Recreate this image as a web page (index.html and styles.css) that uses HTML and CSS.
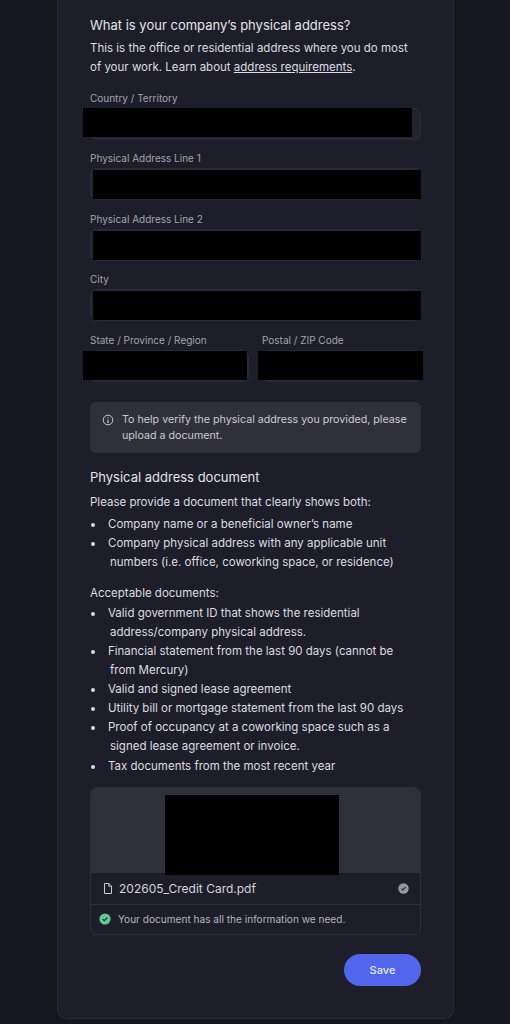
FILE: index.html
```html
<!DOCTYPE html>
<html lang="en">
<head>
    <meta charset="UTF-8">
    <title>Physical address</title>
    <link rel="stylesheet" href="styles.css">
</head>
<body>
    <main class="card">
        <h2 class="title">What is your company’s physical address?</h2>
        <p class="lead">This is the office or residential address where you do most of your work. Learn about <a href="#">address requirements</a>.</p>

        <div class="field">
            <label>Country / Territory</label>
            <div class="input"><div class="redact redact-country"></div></div>
        </div>
        <div class="field">
            <label>Physical Address Line 1</label>
            <div class="input"><div class="redact redact-line"></div></div>
        </div>
        <div class="field">
            <label>Physical Address Line 2</label>
            <div class="input"><div class="redact redact-line"></div></div>
        </div>
        <div class="field">
            <label>City</label>
            <div class="input"><div class="redact redact-line"></div></div>
        </div>
        <div class="field-row">
            <div class="field">
                <label>State / Province / Region</label>
                <div class="input"><div class="redact redact-state"></div></div>
            </div>
            <div class="field">
                <label>Postal / ZIP Code</label>
                <div class="input"><div class="redact redact-zip"></div></div>
            </div>
        </div>

        <div class="notice">
            <svg class="notice-icon" width="12" height="12" viewBox="0 0 12 12" fill="none" stroke="#c9c9d0" stroke-width="1">
                <circle cx="6" cy="6" r="4.8"/>
                <path d="M6 5.4v2.8M5.2 8.3h1.6"/>
                <circle cx="6" cy="3.8" r=".6" fill="#c9c9d0" stroke="none"/>
            </svg>
            <span>To help verify the physical address you provided, please upload a document.</span>
        </div>

        <h3 class="subtitle">Physical address document</h3>
        <p class="list-intro">Please provide a document that clearly shows both:</p>
        <ul class="doc-list">
            <li>Company name or a beneficial owner’s name</li>
            <li>Company physical address with any applicable unit numbers (i.e. office, coworking space, or residence)</li>
        </ul>

        <p class="list-intro list-second">Acceptable documents:</p>
        <ul class="doc-list">
            <li>Valid government ID that shows the residential address/company physical address.</li>
            <li>Financial statement from the last 90 days (cannot be from Mercury)</li>
            <li>Valid and signed lease agreement</li>
            <li>Utility bill or mortgage statement from the last 90 days</li>
            <li>Proof of occupancy at a coworking space such as a signed lease agreement or invoice.</li>
            <li>Tax documents from the most recent year</li>
        </ul>

        <div class="upload">
            <div class="preview"><div class="preview-redact"></div></div>
            <div class="file-row">
                <svg width="12" height="13" viewBox="0 0 12 13" fill="none" stroke="#c9c9d0" stroke-width="1" stroke-linejoin="round">
                    <path d="M2.5 1.5h4.4L9.5 4.1v7.4h-7z"/>
                    <path d="M6.8 1.5v2.7h2.7"/>
                </svg>
                <span class="file-name">202605_Credit Card.pdf</span>
                <svg class="file-status" width="11" height="11" viewBox="0 0 11 11">
                    <circle cx="5.5" cy="5.5" r="5.2" fill="#97979f"/>
                    <path d="M3.4 5.6l1.5 1.4 2.7-2.8" fill="none" stroke="#2a2a35" stroke-width="1.2"/>
                </svg>
            </div>
            <div class="check-row">
                <svg width="12" height="12" viewBox="0 0 12 12">
                    <circle cx="6" cy="6" r="5.6" fill="#63c795"/>
                    <path d="M3.6 6.1l1.7 1.6 3-3.1" fill="none" stroke="#1e2a2a" stroke-width="1.3"/>
                </svg>
                <span>Your document has all the information we need.</span>
            </div>
        </div>

        <div class="actions">
            <button class="save">Save</button>
        </div>
    </main>
</body>
</html>
```

FILE: styles.css
```css
* {
    box-sizing: border-box;
}
body {
    margin: 0;
    height: 1024px;
    overflow: hidden;
    background: #16161e;
    color: #e0e0e5;
    font-family: Inter, "Liberation Sans", sans-serif;
    font-size: 11.5px;
}
.card {
    width: 397px;
    height: 1019px;
    margin-left: 57px;
    padding: 16px 32px 0;
    background: #1e1e2a;
    border: 1px solid #2b2b37;
    border-top: none;
    border-radius: 0 0 10px 10px;
}
.title {
    margin: 0;
    font-size: 13px;
    font-weight: 400;
    line-height: 18px;
    color: #e4e4e8;
}
.lead {
    margin: 5px 0 0;
    line-height: 19px;
    color: #dcdce1;
}
.lead a {
    color: #dcdce1;
}
.field {
    position: relative;
    margin-top: 11.5px;
}
.lead + .field {
    margin-top: 13.5px;
}
.field label {
    display: block;
    height: 17px;
    font-size: 10px;
    line-height: 14px;
    color: #a4a4ad;
}
.input {
    position: relative;
    height: 32px;
    border: 2px solid #2a2a36;
    border-radius: 7px;
    background: #22222e;
}
.redact {
    position: absolute;
    background: #000;
}
.redact-country {
    left: -9px;
    right: 7px;
    top: -2px;
    height: 29px;
}
.redact-line {
    left: 1px;
    right: -2px;
    top: 0;
    height: 29px;
}
.field-row {
    display: grid;
    grid-template-columns: 159px 159px;
    justify-content: space-between;
}
.redact-state {
    left: -9px;
    right: 0;
    top: -1px;
    height: 29px;
}
.redact-zip {
    left: -6px;
    right: -4px;
    top: -1px;
    height: 29px;
}
.notice {
    display: flex;
    gap: 8px;
    margin-top: 20px;
    padding: 10px 6px 9px 12px;
    background: #30303b;
    border-radius: 6px;
    font-size: 10.7px;
    line-height: 16px;
    color: #c9c9d0;
}
.notice-icon {
    flex: none;
    margin-top: 2px;
}
.subtitle {
    margin: 15px 0 0;
    font-size: 13px;
    font-weight: 400;
    line-height: 18px;
    color: #e4e4e8;
}
.list-intro {
    margin: 7px 0 0;
    line-height: 19px;
    color: #dcdce1;
}
.list-second {
    margin-top: 12px;
}
.doc-list {
    margin: 3px 0 0;
    padding: 0 0 0 20px;
    list-style: none;
    color: #dcdce1;
}
.list-second + .doc-list {
    margin-top: 1px;
}
.doc-list li {
    position: relative;
    line-height: 19.1px;
    text-indent: -2px;
}
.doc-list li::before {
    content: "";
    position: absolute;
    left: -19px;
    top: 8px;
    width: 4px;
    height: 4px;
    border-radius: 50%;
    background: #dcdce1;
}
.upload {
    margin-top: 11px;
    border: 1px solid #30303c;
    border-radius: 7px;
    overflow: hidden;
}
.preview {
    display: flex;
    justify-content: center;
    height: 85px;
    padding-top: 7px;
    background: #30303b;
}
.preview-redact {
    flex: none;
    width: 174px;
    height: 80px;
    margin-right: 8px;
    background: #000;
}
.file-row {
    display: flex;
    align-items: center;
    gap: 5px;
    height: 32px;
    padding: 0 11px;
    border-bottom: 1px solid #30303c;
    color: #d4d4da;
    font-size: 12px;
}
.file-name {
    flex: 1;
}
.check-row {
    display: flex;
    align-items: center;
    gap: 7px;
    height: 29px;
    padding: 0 8px;
    font-size: 10.1px;
    color: #b4b4bc;
}
.actions {
    display: flex;
    justify-content: flex-end;
    margin-top: 19px;
}
.save {
    width: 77px;
    height: 32px;
    border: none;
    border-radius: 16px;
    background: #5266eb;
    color: #e8e9f6;
    font-family: inherit;
    font-size: 11px;
    font-weight: 500;
}
```
